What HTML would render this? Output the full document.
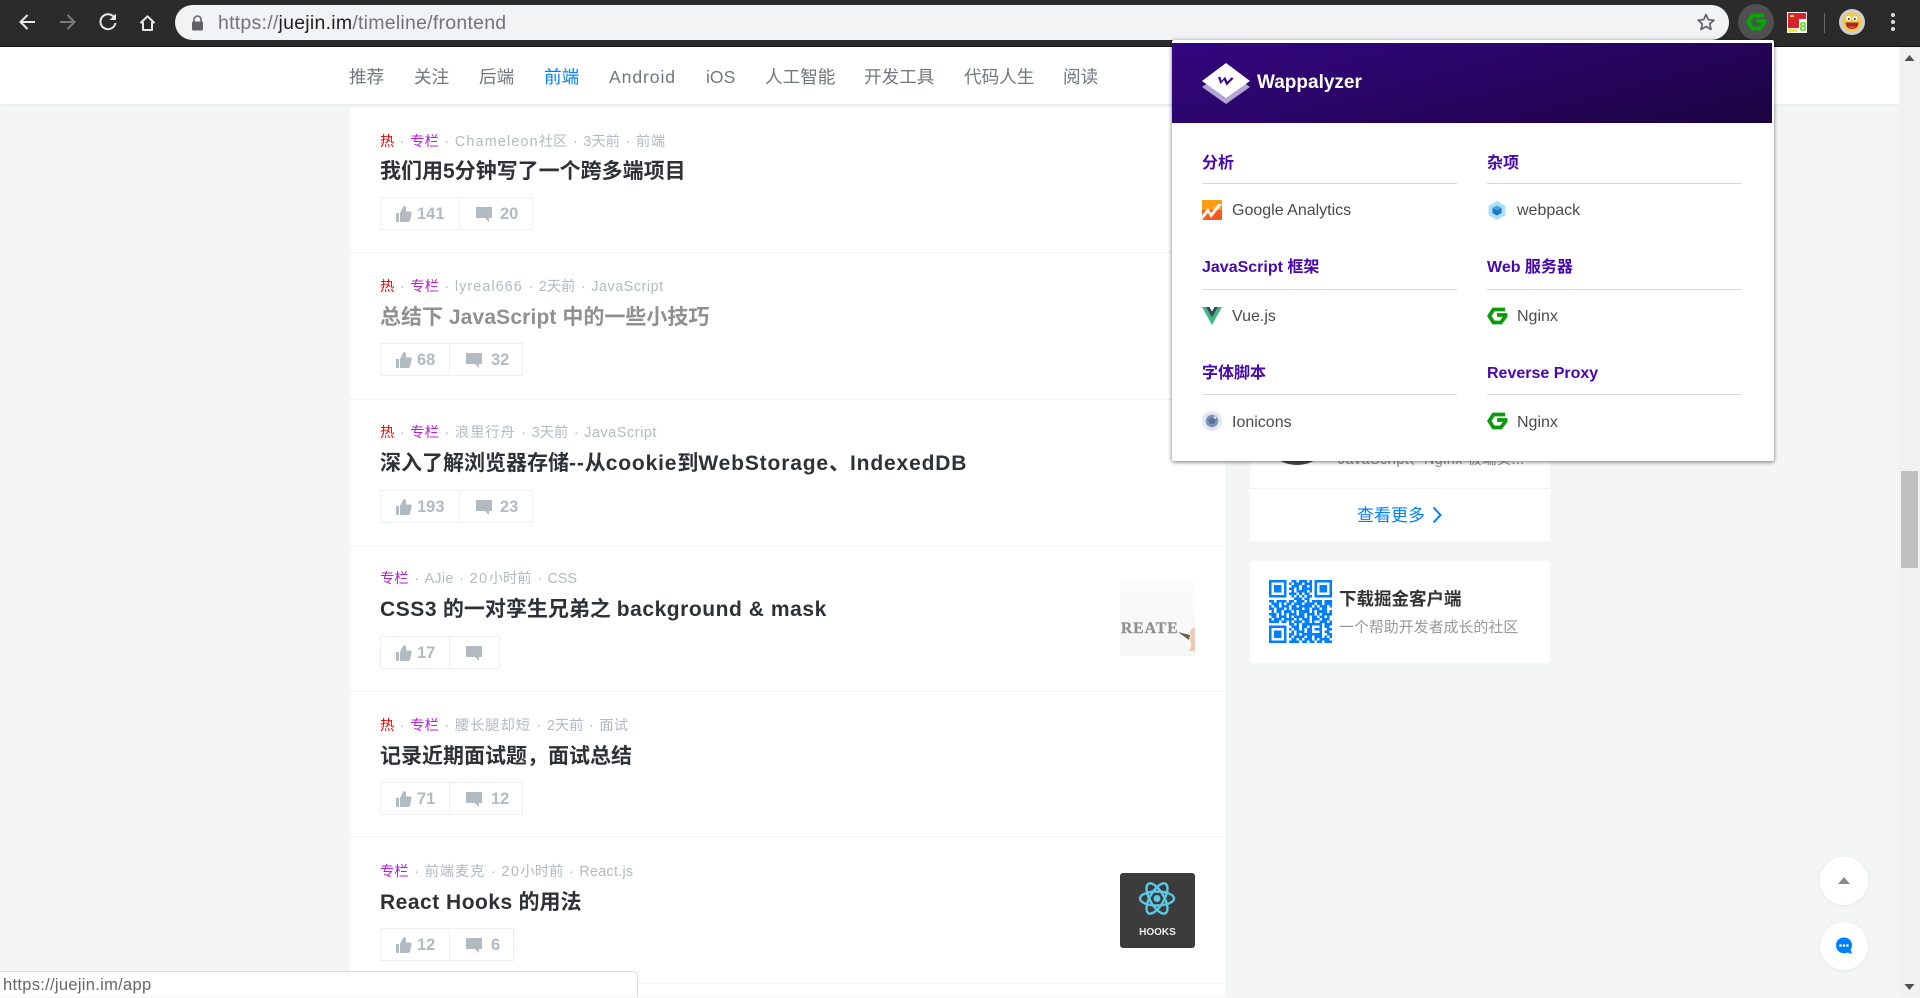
<!DOCTYPE html>
<html lang="zh">
<head>
<meta charset="utf-8">
<title>掘金 - 前端</title>
<style>
html,body{margin:0;padding:0;width:1920px;height:997px;overflow:hidden;background:#f4f5f5;font-family:"Liberation Sans","Noto Sans CJK SC",sans-serif}
*{box-sizing:border-box}
.a{position:absolute;white-space:nowrap}
#tb{position:absolute;left:0;top:0;width:1920px;height:47px;background:#2b2b2b;border-bottom:1px solid #111}
#addr{position:absolute;left:175px;top:5px;width:1554px;height:35px;border-radius:18px;background:#f1f3f4}
#url{left:218px;top:10.5px;font-size:19.5px;line-height:25px;color:#70757a;letter-spacing:.25px}
#url b{font-weight:normal;color:#202124}
#nav{position:absolute;left:0;top:47px;width:1899px;height:57px;background:#fff;box-shadow:0 1px 3px rgba(0,0,0,.06)}
.n{position:absolute;top:15px;font-size:17.6px;line-height:30px;color:#71777c}
#feed{position:absolute;left:350px;top:107px;width:875px;height:890px;background:#fff}
.ln{position:absolute;left:350px;width:875px;height:1px;background:#f1f1f1}
.m{position:absolute;left:380px;font-size:14.3px;line-height:20px;color:#b2bac2;white-space:nowrap}
.m i{font-style:normal;display:inline-block;width:16px;text-align:center}
.m .h{color:#f00}.m .z{color:#b71ed7}
.t{position:absolute;left:380px;font-size:21px;line-height:30px;font-weight:700;color:#2e3135;white-space:nowrap}
.bx{position:absolute;left:380px;height:33px;border:1px solid #edeeef;border-radius:1px;background:#fff}
.bx .d{position:absolute;top:0;width:1px;height:31px;background:#edeeef}
.bx span{position:absolute;top:0;font-size:16.5px;line-height:32px;font-weight:700;color:#b2bac2}
.bx svg{position:absolute;top:8px}
#side1{position:absolute;left:1250px;top:380px;width:300px;height:161px;background:#fff}
#side2{position:absolute;left:1250px;top:561px;width:300px;height:102px;background:#fff;border-radius:3px}
#pop{position:absolute;left:1172px;top:40px;width:602px;height:421px;background:#fff;border-radius:2px;box-shadow:0 1px 4px rgba(0,0,0,.55)}
#hd{position:absolute;left:0;top:3px;width:600px;height:80px;background:linear-gradient(165deg,#33067f 0%,#2a0566 45%,#1b0340 100%)}
.ch{position:absolute;font-size:16px;line-height:22px;font-weight:700;color:#4608ad;white-space:nowrap}
.hr{position:absolute;width:255px;height:1px;background:#d9d9d9}
.it{position:absolute;font-size:16px;line-height:22px;color:#4a4a4a;white-space:nowrap}
#sb{position:absolute;left:1899px;top:47px;width:21px;height:950px;background:#f1f1f1}
.fb{position:absolute;left:1820px;width:48px;height:48px;border-radius:50%;background:#fff;box-shadow:0 1px 4px rgba(0,0,0,.07)}
#st{position:absolute;left:0;top:971px;width:638px;height:26px;background:#fff;border:1px solid #dcdcdc;border-left:0;border-bottom:0;border-top-right-radius:5px}
#st span{position:absolute;left:3px;top:1px;font-size:16.5px;letter-spacing:.3px;line-height:25px;color:#666;white-space:nowrap}
</style>
</head>
<body>

<div id="nav">
  <span class="n" style="left:349px">推荐</span>
  <span class="n" style="left:414px">关注</span>
  <span class="n" style="left:479px">后端</span>
  <span class="n" style="left:544px;color:#007fff">前端</span>
  <span class="n" style="left:609px;letter-spacing:.9px">Android</span>
  <span class="n" style="left:706px">iOS</span>
  <span class="n" style="left:765px">人工智能</span>
  <span class="n" style="left:864px">开发工具</span>
  <span class="n" style="left:964px">代码人生</span>
  <span class="n" style="left:1063px">阅读</span>
</div>

<div id="feed"></div>
<div class="ln" style="top:252px"></div>
<div class="ln" style="top:399px"></div>
<div class="ln" style="top:545px"></div>
<div class="ln" style="top:691px"></div>
<div class="ln" style="top:836px"></div>
<div class="ln" style="top:983px"></div>

<!-- item 1 -->
<div class="m" style="top:132px"><span class="h">热</span><i>·</i><span class="z">专栏</span><i>·</i><span style="letter-spacing:1.2px">Chameleon</span>社区<i>·</i>3天前<i>·</i><span style="letter-spacing:.6px">前端</span></div>
<div class="t" style="top:157px">我们用5分钟写了一个跨多端项目</div>
<div class="bx" style="top:197px;width:153px"><div class="d" style="left:78px"></div>
  <svg style="left:15px" width="16" height="16" viewBox="0 0 16 16"><path fill="#b2bac2" d="M0 7h3v9H1q-1 0-1-1zM4 7l3-6q.5-1 1.5-.8Q10 .6 10 2v3.500h4q2 0 1.600 2l-1.400 6.500q-.4 2-2.200 2H4z"/></svg>
  <span style="left:36px">141</span>
  <svg style="left:95px;top:9px" width="16" height="15" viewBox="0 0 16 15"><path fill="#b2bac2" d="M0 0h16v11h-3v4l-4-4H0z"/></svg>
  <span style="left:119px">20</span>
</div>

<!-- item 2 -->
<div class="m" style="top:277px"><span class="h">热</span><i>·</i><span class="z">专栏</span><i>·</i><span style="letter-spacing:1.1px">lyreal666</span><i>·</i>2天前<i>·</i><span style="letter-spacing:.55px">JavaScript</span></div>
<div class="t" style="top:303px;color:#909090">总结下 <span style="letter-spacing:.15px">JavaScript</span> 中的一些小技巧</div>
<div class="bx" style="top:343px;width:143px"><div class="d" style="left:68px"></div>
  <svg style="left:15px" width="16" height="16" viewBox="0 0 16 16"><path fill="#b2bac2" d="M0 7h3v9H1q-1 0-1-1zM4 7l3-6q.5-1 1.500-.8Q10 .6 10 2v3.500h4q2 0 1.600 2l-1.400 6.500q-.4 2-2.200 2H4z"/></svg>
  <span style="left:36px">68</span>
  <svg style="left:85px;top:9px" width="16" height="15" viewBox="0 0 16 15"><path fill="#b2bac2" d="M0 0h16v11h-3v4l-4-4H0z"/></svg>
  <span style="left:110px">32</span>
</div>

<!-- item 3 -->
<div class="m" style="top:423px"><span class="h">热</span><i>·</i><span class="z">专栏</span><i>·</i><span style="letter-spacing:.9px">浪里行舟</span><i>·</i>3天前<i>·</i><span style="letter-spacing:.6px">JavaScript</span></div>
<div class="t" style="top:449px">深入了解浏览器存储<span style="letter-spacing:.85px">--</span>从<span style="letter-spacing:.85px">cookie</span>到<span style="letter-spacing:.85px">WebStorage</span>、<span style="letter-spacing:.85px">IndexedDB</span></div>
<div class="bx" style="top:490px;width:153px"><div class="d" style="left:78px"></div>
  <svg style="left:15px" width="16" height="16" viewBox="0 0 16 16"><path fill="#b2bac2" d="M0 7h3v9H1q-1 0-1-1zM4 7l3-6q.5-1 1.500-.8Q10 .6 10 2v3.500h4q2 0 1.600 2l-1.400 6.500q-.4 2-2.200 2H4z"/></svg>
  <span style="left:36px">193</span>
  <svg style="left:95px;top:9px" width="16" height="15" viewBox="0 0 16 15"><path fill="#b2bac2" d="M0 0h16v11h-3v4l-4-4H0z"/></svg>
  <span style="left:119px">23</span>
</div>

<!-- item 4 -->
<div class="m" style="top:569px"><span class="z">专栏</span><i>·</i><span style="letter-spacing:.3px">AJie</span><i>·</i><span style="letter-spacing:1.6px">20</span>小时前<i>·</i>CSS</div>
<div class="t" style="top:595px"><span style="letter-spacing:.55px">CSS3</span> 的一对孪生兄弟之 <span style="letter-spacing:.55px">background &amp; mask</span></div>
<div class="bx" style="top:636px;width:120px"><div class="d" style="left:68px"></div>
  <svg style="left:15px" width="16" height="16" viewBox="0 0 16 16"><path fill="#b2bac2" d="M0 7h3v9H1q-1 0-1-1zM4 7l3-6q.5-1 1.500-.8Q10 .6 10 2v3.500h4q2 0 1.600 2l-1.400 6.500q-.4 2-2.200 2H4z"/></svg>
  <span style="left:36px">17</span>
  <svg style="left:85px;top:9px" width="16" height="15" viewBox="0 0 16 15"><path fill="#b2bac2" d="M0 0h16v11h-3v4l-4-4H0z"/></svg>
</div>
<svg class="a" style="left:1120px;top:581px;border-radius:3px" width="75" height="75" viewBox="0 0 75 75">
  <defs><linearGradient id="g1" x1="0" y1="0" x2="0" y2="1"><stop offset="0" stop-color="#fbfbfb"/><stop offset="1" stop-color="#f6f6f6"/></linearGradient></defs>
  <rect width="75" height="75" fill="url(#g1)"/>
  <text x="1" y="52" font-family="Liberation Serif,serif" font-weight="700" font-size="15.500" letter-spacing="1.100" fill="#8f8f8f" stroke="#999" stroke-width=".4">REATE</text>
  <path d="M58 51L70 54 69 59z" fill="#6b5f50"/>
  <path d="M70 50q2-3 5-4v24h-6q2-3 2-6 0-3-1-5 1-4 0-9z" fill="#eec9b6"/>
</svg>

<!-- item 5 -->
<div class="m" style="top:716px"><span class="h">热</span><i>·</i><span class="z">专栏</span><i>·</i><span style="letter-spacing:.9px">腰长腿却短</span><i>·</i>2天前<i>·</i>面试</div>
<div class="t" style="top:742px">记录近期面试题，面试总结</div>
<div class="bx" style="top:782px;width:143px"><div class="d" style="left:68px"></div>
  <svg style="left:15px" width="16" height="16" viewBox="0 0 16 16"><path fill="#b2bac2" d="M0 7h3v9H1q-1 0-1-1zM4 7l3-6q.5-1 1.500-.8Q10 .6 10 2v3.500h4q2 0 1.600 2l-1.400 6.500q-.4 2-2.200 2H4z"/></svg>
  <span style="left:36px">71</span>
  <svg style="left:85px;top:9px" width="16" height="15" viewBox="0 0 16 15"><path fill="#b2bac2" d="M0 0h16v11h-3v4l-4-4H0z"/></svg>
  <span style="left:110px">12</span>
</div>

<!-- item 6 -->
<div class="m" style="top:862px"><span class="z">专栏</span><i>·</i><span style="letter-spacing:.9px">前端麦克</span><i>·</i><span style="letter-spacing:1.6px">20</span>小时前<i>·</i><span style="letter-spacing:.3px">React.js</span></div>
<div class="t" style="top:888px"><span style="letter-spacing:.5px">React Hooks</span> 的用法</div>
<div class="bx" style="top:928px;width:134px"><div class="d" style="left:68px"></div>
  <svg style="left:15px" width="16" height="16" viewBox="0 0 16 16"><path fill="#b2bac2" d="M0 7h3v9H1q-1 0-1-1zM4 7l3-6q.5-1 1.500-.8Q10 .6 10 2v3.500h4q2 0 1.600 2l-1.400 6.500q-.4 2-2.200 2H4z"/></svg>
  <span style="left:36px">12</span>
  <svg style="left:85px;top:9px" width="16" height="15" viewBox="0 0 16 15"><path fill="#b2bac2" d="M0 0h16v11h-3v4l-4-4H0z"/></svg>
  <span style="left:110px">6</span>
</div>
<svg class="a" style="left:1120px;top:873px" width="75" height="75" viewBox="0 0 75 75">
  <rect width="75" height="75" rx="3" fill="#3c3c3c"/>
  <g fill="none" stroke="#5cc8e6" stroke-width="2.400">
    <ellipse cx="37" cy="25.500" rx="17" ry="7"/>
    <ellipse cx="37" cy="25.500" rx="17" ry="7" transform="rotate(60 37 25.500)"/>
    <ellipse cx="37" cy="25.500" rx="17" ry="7" transform="rotate(120 37 25.500)"/>
  </g>
  <circle cx="37" cy="25.500" r="3.500" fill="#5cc8e6"/>
  <text x="37.500" y="62" text-anchor="middle" font-family="Liberation Sans,sans-serif" font-weight="700" font-size="10" fill="#eee">HOOKS</text>
</svg>

<!-- sidebar -->
<div id="side1">
  <div class="a" style="left:11px;top:13px;width:72px;height:72px;border-radius:50%;background:#4a4545"></div>
  <div class="a" style="left:88px;top:58px;font-size:14.3px;line-height:20px;letter-spacing:.45px;color:#8a8a8a;margin-top:12px">JavaScript、Nginx 极端实...</div>
  <div class="a" style="left:0;top:108px;width:300px;height:1px;background:#f1f1f1"></div>
  <div class="a" style="left:107px;top:122px;font-size:17px;line-height:28px;color:#007fff">查看更多</div>
  <svg class="a" style="left:182px;top:126px" width="10" height="18" viewBox="0 0 10 18"><path d="M1.500 1.500L8.500 9l-7 7.500" fill="none" stroke="#007fff" stroke-width="2"/></svg>
</div>
<div id="side2">
  <svg class="a" style="left:19px;top:19px" width="63" height="63" viewBox="0 0 25 25" shape-rendering="crispEdges">
    <g fill="none" stroke="#007fff" stroke-width="1">
      <path d="M0 .5h7M0 6.500h7M.5 0v7M6.500 0v7M18 .5h7M18 6.500h7M18.500 0v7M24.500 0v7M0 18.500h7M0 24.500h7M.5 18v7M6.500 18v7"/>
      <path d="M9 .5h2M12 .5h3M16 .5h1M8 1.500h1M10 1.500h3M14 1.500h3M9 2.500h3M13 2.500h2M16 2.500h1M8 3.500h2M11 3.500h1M13 3.500h4M9 4.500h1M11 4.500h4M16 4.500h1M8 5.500h3M12 5.500h1M14 5.500h2M9 6.500h1M11 6.500h1M13 6.500h1M15 6.500h2M10 7.500h3M14 7.500h2"/>
      <path d="M0 8.500h2M3 8.500h4M8 8.500h2M11 8.500h3M15 8.500h1M17 8.500h4M22 8.500h3M1 9.500h3M5 9.500h1M7 9.500h2M10 9.500h3M14 9.500h4M19 9.500h2M22 9.500h3M0 10.500h1M2 10.500h2M5 10.500h3M9 10.500h2M12 10.500h5M18 10.500h1M20 10.500h3M24 10.500h1M0 11.500h2M3 11.500h3M7 11.500h1M9 11.500h4M14 11.500h2M17 11.500h3M21 11.500h2M1 12.500h1M3 12.500h2M6 12.500h3M10 12.500h1M12 12.500h4M17 12.500h1M19 12.500h4M24 12.500h1M0 13.500h3M4 13.500h1M6 13.500h1M8 13.500h3M12 13.500h2M15 13.500h3M19 13.500h1M21 13.500h4M1 14.500h2M4 14.500h3M8 14.500h1M10 14.500h4M15 14.500h1M17 14.500h2M20 14.500h2M23 14.500h1M0 15.500h1M2 15.500h3M6 15.500h4M11 15.500h1M13 15.500h3M17 15.500h3M21 15.500h3M0 16.500h4M5 16.500h2M8 16.500h1M10 16.500h3M14 16.500h2M17 16.500h1M20 16.500h3M24 16.500h1"/>
      <path d="M8 17.500h2M11 17.500h1M13 17.500h3M16 17.500h5M22 17.500h3M9 18.500h3M13 18.500h2M16 18.500h1M20 18.500h1M22 18.500h2M8 19.500h1M10 19.500h2M13 19.500h1M15 19.500h2M18 19.500h1M20 19.500h1M23 19.500h2M9 20.500h1M11 20.500h3M15 20.500h2M20 20.500h1M22 20.500h2M8 21.500h2M11 21.500h1M13 21.500h3M16 21.500h5M23 21.500h2M8 22.500h1M10 22.500h4M15 22.500h2M18 22.500h3M22 22.500h1M24 22.500h1M9 23.500h2M12 23.500h1M14 23.500h3M18 23.500h1M20 23.500h4M8 24.500h4M13 24.500h2M16 24.500h2M19 24.500h2M22 24.500h3"/>
    </g>
    <path fill="#007fff" d="M2 2h3v3H2zM20 2h3v3h-3zM2 20h3v3H2zM19 19h1v1h-1z"/>
  </svg>
  <div class="a" style="left:89px;top:24px;font-size:17.500px;line-height:28px;font-weight:700;color:#333">下载掘金客户端</div>
  <div class="a" style="left:89px;top:56px;font-size:14.950px;line-height:22px;color:#999">一个帮助开发者成长的社区</div>
</div>

<!-- scrollbar -->
<div id="sb">
  <div class="a" style="left:2px;top:424px;width:17px;height:97px;background:#c1c1c1"></div>
  <svg class="a" style="left:5px;top:7px" width="11" height="8" viewBox="0 0 11 8"><path d="M5.500 1L10.500 7H.5z" fill="#505050"/></svg>
  <svg class="a" style="left:5px;top:936px" width="11" height="8" viewBox="0 0 11 8"><path d="M5.500 7L10.500 1H.5z" fill="#505050"/></svg>
</div>

<!-- floating buttons -->
<div class="fb" style="top:857px"><svg class="a" style="left:18px;top:20px" width="12" height="7" viewBox="0 0 12 7"><path d="M6 0l6 7H0z" fill="#8a8a8a"/></svg></div>
<div class="fb" style="top:922px"><svg class="a" style="left:15px;top:15px" width="18" height="18" viewBox="0 0 18 18"><path d="M9 .5c4.600 0 8 3.300 8 7.700 0 1.800-.5 3.300-1.400 4.600l1.400 4.200-4.300-1.500c-1.100.5-2.400.7-3.700.7-4.600 0-8-3.300-8-8S4.400.5 9 .5z" fill="#007fff"/><circle cx="5.500" cy="8.500" r="1.300" fill="#fff"/><circle cx="9" cy="8.500" r="1.300" fill="#fff"/><circle cx="12.500" cy="8.500" r="1.300" fill="#fff"/></svg></div>

<!-- status bubble -->
<div id="st"><span>https://juejin.im/app</span></div>

<!-- browser toolbar -->
<div id="tb">
  <svg class="a" style="left:0;top:0" width="175" height="46" viewBox="0 0 175 46" fill="none">
    <path d="M35 22H21M27.500 15L20.500 22l7 7" stroke="#e8e8e8" stroke-width="2"/>
    <path d="M60 22h14M67.500 15l7 7-7 7" stroke="#7b7b7b" stroke-width="2"/>
    <path d="M113.700 16.800A7.500 7.500 0 1 0 115.400 23" stroke="#e8e8e8" stroke-width="2"/>
    <path d="M116 13.500v6.500h-6.500z" fill="#e8e8e8"/>
    <path d="M147.500 16.300L141 22.500h2V30h9v-7.500h2z" stroke="#e8e8e8" stroke-width="2" stroke-linejoin="round"/>
  </svg>
  <div id="addr"></div>
  <svg class="a" style="left:191px;top:15px" width="13" height="16" viewBox="0 0 13 16"><path d="M3 7V4.500a3.500 3.500 0 0 1 7 0V7" fill="none" stroke="#5f6368" stroke-width="1.600"/><rect x="1" y="6.500" width="11" height="9" rx="1.200" fill="#5f6368"/></svg>
  <div class="a" id="url">https://<b>juejin.im</b>/timeline/frontend</div>
  <svg class="a" style="left:1696px;top:12px" width="20" height="20" viewBox="0 0 20 20"><path d="M10 2.500l2.300 5.200 5.600.5-4.200 3.700 1.300 5.500L10 14.500l-5 2.900 1.300-5.500L2.100 8.200l5.600-.5z" fill="none" stroke="#5f6368" stroke-width="1.700" stroke-linejoin="round"/></svg>
  <div class="a" style="left:1738px;top:4px;width:36px;height:36px;border-radius:50%;background:#505050"></div>
  <svg class="a" style="left:1746px;top:12px" width="21" height="20" viewBox="0 0 21 20"><path d="M18 3.500H6.500L2.300 10l4.200 6.500h7.300l4.700-6V9H10" fill="none" stroke="#00a800" stroke-width="3.800"/></svg>
  <svg class="a" style="left:1787px;top:12px" width="20" height="21" viewBox="0 0 20 21">
    <rect width="20" height="21" fill="#f2f2f2"/><rect x="1" y="1" width="18" height="15" fill="#d7232a"/><rect x="3" y="3" width="4" height="2" fill="#f5d14a"/>
    <rect x="1" y="17" width="9" height="3" fill="#f5ec20"/><rect x="12" y="7" width="8" height="14" fill="#fff"/>
    <text x="16" y="19" text-anchor="middle" font-family="Liberation Sans,sans-serif" font-weight="700" font-size="13" fill="#53d918">8</text>
  </svg>
  <div class="a" style="left:1824px;top:13px;width:1px;height:20px;background:#666"></div>
  <svg class="a" style="left:1839px;top:9px" width="26" height="26" viewBox="0 0 26 26">
    <circle cx="13" cy="13" r="13" fill="#cfcfcf"/><circle cx="13" cy="13" r="9.500" fill="#f6c945"/>
    <circle cx="9.500" cy="9.500" r="2.500" fill="#fff"/><circle cx="16" cy="9.500" r="2.500" fill="#fff"/><circle cx="9.800" cy="10" r="1" fill="#333"/><circle cx="15.800" cy="10" r="1" fill="#333"/>
    <path d="M6.500 13.500h13c0 4-2.800 6.500-6.500 6.500s-6.500-2.500-6.500-6.500z" fill="#a8261c"/><path d="M9.500 17.500h7c-1 1.800-6 1.800-7 0z" fill="#ef6b60"/>
  </svg>
  <svg class="a" style="left:1890px;top:12px" width="6" height="20" viewBox="0 0 6 20"><circle cx="3" cy="3" r="2" fill="#ddd"/><circle cx="3" cy="10" r="2" fill="#ddd"/><circle cx="3" cy="17" r="2" fill="#ddd"/></svg>
</div>

<!-- Wappalyzer popup -->
<div id="pop">
  <div id="hd"></div>
  <svg class="a" style="left:29px;top:22px" width="50" height="42" viewBox="0 0 50 42">
    <path d="M25 8l24 17-24 17L1 25z" fill="#b3a5d1"/>
    <path d="M25 1l24 18-24 17L1 19z" fill="#fff"/>
    <path d="M17 15l2.500 7 3.500-4 2.500 5.500 7-7-1.800-1.200-4.300 4.400-2.300-5-3.500 4-1.300-4z" fill="#33067f"/>
  </svg>
  <div class="a" style="left:85px;top:31px;font-size:19px;line-height:24px;font-weight:700;color:#fff">Wappalyzer</div>

  <div class="ch" style="left:30px;top:113px">分析</div>
  <div class="hr" style="left:30px;top:143px"></div>
  <div class="ch" style="left:315px;top:113px">杂项</div>
  <div class="hr" style="left:315px;top:143px"></div>

  <svg class="a" style="left:30px;top:160px" width="20" height="20" viewBox="0 0 20 20">
    <rect width="20" height="10" fill="#ff9c11"/><rect y="10" width="20" height="10" fill="#f55a20"/>
    <path d="M0 15l6-7 3 5 7-9h4l-11 14-3-5-6 7z" fill="#fff" opacity=".92"/>
  </svg>
  <div class="it" style="left:60px;top:160px">Google Analytics</div>
  <svg class="a" style="left:316px;top:161px" width="18" height="19" viewBox="0 0 18 19">
    <path d="M9 0l8.500 4.700v9.600L9 19 .5 14.300V4.700z" fill="#a9e0fb"/>
    <path d="M9 4.500l4.500 2.500v5L9 14.500 4.500 12V7z" fill="#1c78c0"/>
    <path d="M9 4.500l4.500 2.500L9 9.500 4.500 7z" fill="#4aa4dd"/>
  </svg>
  <div class="it" style="left:345px;top:160px">webpack</div>

  <div class="ch" style="left:30px;top:217px">JavaScript 框架</div>
  <div class="hr" style="left:30px;top:249px"></div>
  <div class="ch" style="left:315px;top:217px">Web 服务器</div>
  <div class="hr" style="left:315px;top:249px"></div>

  <svg class="a" style="left:30px;top:267px" width="20" height="18" viewBox="0 0 20 18">
    <path d="M0 0h4l6 10.500L16 0h4L10 18z" fill="#41b883"/>
    <path d="M4 0h3.500L10 4.500 12.500 0H16l-6 10.500z" fill="#35495e"/>
  </svg>
  <div class="it" style="left:60px;top:266px">Vue.js</div>
  <svg class="a" style="left:315px;top:266px" width="21" height="20" viewBox="0 0 21 20"><path d="M18 3.500H6.500L2.300 10l4.200 6.500h7.300l4.700-6V9H10" fill="none" stroke="#0a9a0a" stroke-width="3.800"/></svg>
  <div class="it" style="left:345px;top:266px">Nginx</div>

  <div class="ch" style="left:30px;top:323px">字体脚本</div>
  <div class="hr" style="left:30px;top:354px"></div>
  <div class="ch" style="left:315px;top:323px">Reverse Proxy</div>
  <div class="hr" style="left:315px;top:354px"></div>

  <svg class="a" style="left:30px;top:371px" width="20" height="20" viewBox="0 0 20 20">
    <circle cx="10" cy="10" r="10" fill="#e4e8f2"/><circle cx="10" cy="10" r="6.200" fill="#7c90b8"/><circle cx="10" cy="10" r="3.200" fill="#5a6f9c"/><circle cx="13" cy="6.500" r="1.200" fill="#e4e8f2"/>
  </svg>
  <div class="it" style="left:60px;top:372px">Ionicons</div>
  <svg class="a" style="left:315px;top:371px" width="21" height="20" viewBox="0 0 21 20"><path d="M18 3.500H6.500L2.300 10l4.200 6.500h7.300l4.700-6V9H10" fill="none" stroke="#0a9a0a" stroke-width="3.800"/></svg>
  <div class="it" style="left:345px;top:372px">Nginx</div>
</div>

</body>
</html>
